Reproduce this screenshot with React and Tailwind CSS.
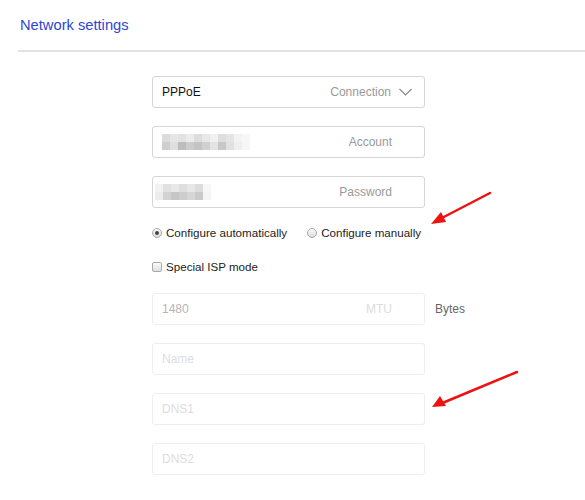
import React from 'react';

// pixelated (blurred) value blocks
const Pixels = ({ rows }) => (
    <div className="flex flex-col">
        {rows.map((row, i) => (
            <div key={i} className="flex">
                {row.map((c, j) => (
                    <div key={j} className="w-[8px] h-[8px]" style={{ backgroundColor: c }} />
                ))}
            </div>
        ))}
    </div>
);

const accountPx = [
    ['#dcdcdc', '#e6e6e6', '#e2e2e2', '#ebebeb', '#dddddd', '#e8e8e8', '#f0f0f0', '#dedede', '#e4e4e4', '#f3f3f3', '#f7f7f7'],
    ['#cfcfcf', '#dfdfdf', '#bdbdbd', '#cccccc', '#c4c4c4', '#d0d0d0', '#e3e3e3', '#c8c8c8', '#e0e0e0', '#eeeeee', '#f6f6f6'],
];
const passwordPx = [
    ['#f2f2f2', '#e1e1e1', '#e9e9e9', '#dedede', '#e7e7e7', '#dcdcdc', '#f7f7f7'],
    ['#ececec', '#d2d2d2', '#c6c6c6', '#cdcdcd', '#d6d6d6', '#cacaca', '#f5f5f5'],
];

const Field = ({ children, faint }) => (
    <div
        className={`w-[273px] h-[32px] rounded-[3px] border flex items-center px-[9px] ${
            faint ? 'border-[#eeeeee]' : 'border-[#d6d6d6]'
        }`}
    >
        {children}
    </div>
);

const Radio = ({ checked }) => (
    <span className="w-[10px] h-[10px] rounded-full border border-[#a9a9a9] bg-gradient-to-b from-[#fafafa] to-[#dcdcdc] flex items-center justify-center">
        {checked && <span className="w-[4px] h-[4px] rounded-full bg-[#444]" />}
    </span>
);

const App = () => {
    return (
        <div className="relative w-[585px] h-[500px] bg-white overflow-hidden" style={{ fontFamily: '"Liberation Sans", Arial, sans-serif' }}>
            {/* Header */}
            <div className="h-[50px] pl-[20px] flex items-center">
                <h1 className="text-[14.7px] text-[#2c46d0] leading-none">Network settings</h1>
            </div>
            <div className="ml-[18px] h-[2px] bg-[#e3e3e3]" />

            {/* Form */}
            <div className="pl-[152px] pt-[24px] flex flex-col text-[12px]">
                <Field>
                    <span className="text-[#111]">PPPoE</span>
                    <span className="ml-auto text-[#999]">Connection</span>
                    <svg className="ml-[8px] mr-[3px]" width="13" height="8" viewBox="0 0 13 8" fill="none">
                        <path d="M0.5 1L6.5 7L12.5 1" stroke="#8a8a8a" strokeWidth="1.2" />
                    </svg>
                </Field>

                <div className="mt-[18px]">
                    <Field>
                        <Pixels rows={accountPx} />
                        <span className="ml-auto mr-[23px] text-[#999]">Account</span>
                    </Field>
                </div>

                <div className="mt-[18px]">
                    <div className="w-[273px] h-[32px] rounded-[3px] border border-[#d6d6d6] flex items-center pl-[2px] pr-[9px]">
                        <Pixels rows={passwordPx} />
                        <span className="ml-auto mr-[23px] text-[#999]">Password</span>
                    </div>
                </div>

                {/* Mode */}
                <div className="mt-[17px] h-[16px] flex items-center text-[11.6px] text-[#222]">
                    <Radio checked />
                    <span className="ml-[4px]">Configure automatically</span>
                    <span className="ml-[20px]"><Radio /></span>
                    <span className="ml-[4px]">Configure manually</span>
                </div>

                <div className="mt-[18px] h-[16px] flex items-center text-[11.6px] text-[#222]">
                    <span className="w-[10px] h-[10px] rounded-[2px] border border-[#a9a9a9] bg-gradient-to-b from-[#fafafa] to-[#e0e0e0]" />
                    <span className="ml-[4px]">Special ISP mode</span>
                </div>

                <div className="mt-[18px] flex items-center">
                    <Field faint>
                        <span className="text-[#b5b5b5]">1480</span>
                        <span className="ml-auto mr-[23px] text-[#dddddd]">MTU</span>
                    </Field>
                    <span className="ml-[10px] text-[#666]">Bytes</span>
                </div>

                <div className="mt-[18px]">
                    <Field faint>
                        <span className="text-[#dddddd]">Name</span>
                    </Field>
                </div>
                <div className="mt-[18px]">
                    <Field faint>
                        <span className="text-[#dddddd]">DNS1</span>
                    </Field>
                </div>
                <div className="mt-[18px]">
                    <Field faint>
                        <span className="text-[#dddddd]">DNS2</span>
                    </Field>
                </div>
            </div>

            {/* Annotation arrows */}
            <svg className="absolute left-0 top-0 pointer-events-none" width="585" height="500">
                <g stroke="#ee1111" strokeWidth="2.5" strokeLinecap="round" fill="none">
                    <line x1="490" y1="193" x2="438" y2="220" />
                    <line x1="517" y1="372" x2="440" y2="404" />
                </g>
                <polygon points="431,224 441,212 446,222" fill="#ee1111" />
                <polygon points="432,407 440,396 446,406" fill="#ee1111" />
            </svg>
        </div>
    );
};

export default App;
